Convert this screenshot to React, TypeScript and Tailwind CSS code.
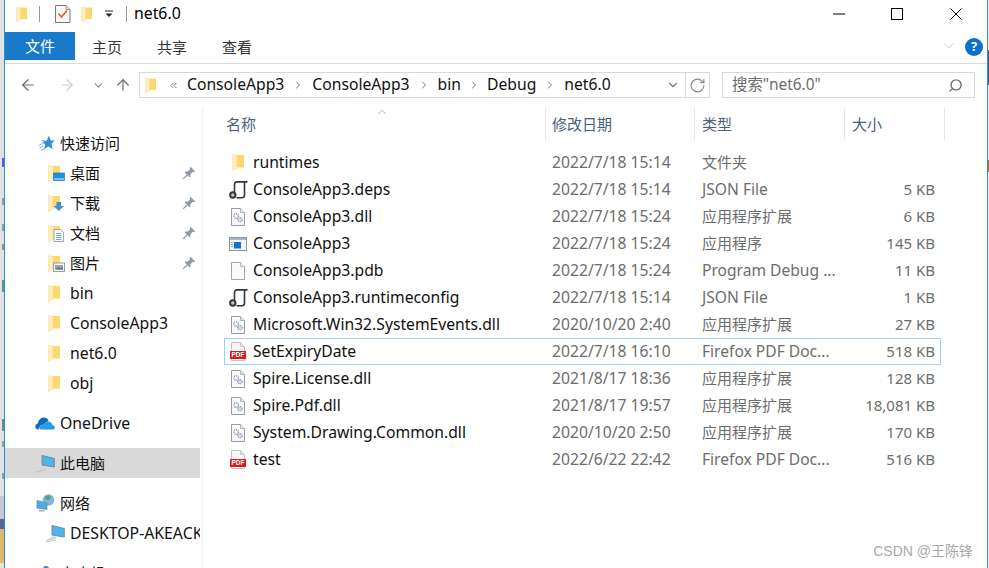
import { ArrowLeft, ArrowRight, ArrowUp, ChevronDown, ChevronRight, ChevronUp, ChevronsLeft, RotateCw, Search } from "lucide-react";
import type { ReactNode } from "react";

function Folder({ className = "w-[13px] h-[17px]" }: { className?: string }) {
  return (
    <svg viewBox="0 0 13 17" className={className + " shrink-0"}>
      <path d="M3 1h9v12.5H3z" fill="#fcd770" />
      <path d="M0 0.5 5 1.5V14.5L0 16.8z" fill="#ffeebb" stroke="#f4dc9a" strokeWidth="0.5" />
    </svg>
  );
}

function QuickFolder({ overlay }: { overlay: "desktop" | "down" | "doc" | "pic" }) {
  return (
    <svg viewBox="0 0 17 17" className="w-[17px] h-[17px] shrink-0">
      <path d="M3 1h9v12.5H3z" fill="#fcd770" />
      <path d="M0 0.5 5 1.5V14.5L0 16.8z" fill="#ffeebb" stroke="#f4dc9a" strokeWidth="0.5" />
      {overlay === "desktop" && (
        <>
          <rect x="5.5" y="8" width="11" height="7.5" fill="#1b8fe6" stroke="#0d6fbd" strokeWidth="0.6" />
          <path d="M6 14H16" stroke="#d8ecfa" />
        </>
      )}
      {overlay === "down" && <path d="M8.5 7H13V11H16L10.8 16 5.8 11H8.5z" fill="#3a8fde" />}
      {overlay === "doc" && (
        <>
          <path d="M6 4.5H12.5L15.5 7.5V16.5H6z" fill="#fbfbfb" stroke="#8c98a6" strokeWidth="0.8" />
          <path d="M8 8.5H13M8 10.5H13.5M8 12.5H13.5M8 14.5H13.5" stroke="#4a9ae0" strokeWidth="0.8" />
        </>
      )}
      {overlay === "pic" && (
        <>
          <rect x="5.5" y="8" width="11" height="8.5" fill="#fafafa" stroke="#9aa0a6" />
          <rect x="7" y="10" width="8" height="4.5" fill="#8fa4b4" />
          <path d="M7 14.5 10.5 12 12.5 13.5 15 12.5V14.5z" fill="#57707f" />
        </>
      )}
    </svg>
  );
}

function PinIcon() {
  return (
    <svg viewBox="0 0 14 14" className="w-[14px] h-[14px] shrink-0" fill="#8f9aa5">
      <path d="M8.5 0.8 13.2 5.5 11.8 6.3 10.8 5.8 8.4 8.2 8.4 10.6 7.4 11.2 2.8 6.6 3.4 5.6 5.8 5.6 8.2 3.2 7.7 2.2z" />
      <path d="M4.6 8.4 5.6 9.4 1.4 13.2 0.8 12.6z" />
    </svg>
  );
}

function StarIcon() {
  return (
    <svg viewBox="0 0 17 16" className="w-[17px] h-[16px] shrink-0">
      <path d="M11 0.5 12.6 5.4 16.8 5.6 13.5 8.8 14.6 14.2 10.2 11.2 6 14.8 7.2 9.6 4.2 7 8.8 5.6z" fill="#2b8fe0" />
      <path d="M0.5 10.5 5 8.5M1.5 13 5.5 11M3 15.5 6.5 13.5M3 5.5 7 5.5" stroke="#7dbdf0" strokeWidth="1" />
    </svg>
  );
}

function CloudIcon() {
  return (
    <svg viewBox="0 0 20 14" className="w-[20px] h-[14px] shrink-0">
      <path d="M3.5 13.5C1.5 13.5 0.3 12 0.3 10.4 0.3 8.8 1.5 7.6 3 7.4 3.4 4 5.8 1.6 8.8 1.6 11 1.6 12.8 2.8 13.6 4.6L10 8 5.5 9.5z" fill="#0f6cc0" />
      <path d="M5 13.5C4 11 5.5 9 8 8.8 9 7 11 5.6 13 5.6 15.4 5.6 17 7 17.4 9 18.8 9.2 19.8 10.2 19.8 11.4 19.8 12.6 18.8 13.5 17.6 13.5z" fill="#2b9be8" />
    </svg>
  );
}

function PcIcon() {
  return (
    <svg viewBox="0 0 20 19" className="w-[20px] h-[19px] shrink-0">
      <path d="M7 1.5 19.3 4.5V13L7 11z" fill="#4fb4ee" stroke="#6f8193" strokeWidth="0.9" />
      <path d="M8 12 11.5 13 11 15 1 17.2 0.5 16.4z" fill="#d4d8dc" />
      <path d="M1 18 11 16" stroke="#b8bdc2" strokeWidth="0.8" />
    </svg>
  );
}

function NetworkIcon() {
  return (
    <svg viewBox="0 0 19 18" className="w-[19px] h-[18px] shrink-0">
      <circle cx="12.5" cy="6" r="5.8" fill="#7fb6dd" />
      <path d="M9 3c2-2 5-2 6 0-1 2-1 3-3 3S9 5 9 3z" fill="#5f9e7c" />
      <path d="M1 6.5 11 9v6.5L1 14z" fill="#47aeea" stroke="#74899c" strokeWidth="0.8" />
      <path d="M3 15.5 9 16.5V17.5H3z" fill="#a9b2ba" />
    </svg>
  );
}

function PersonIcon() {
  return (
    <svg viewBox="0 0 16 16" className="w-[16px] h-[16px] shrink-0">
      <circle cx="8" cy="4" r="3" fill="#3b7fc4" />
      <path d="M2 15C2 10 5 8 8 8S14 10 14 15z" fill="#3b7fc4" />
    </svg>
  );
}

function ScriptIcon() {
  return (
    <svg viewBox="0 0 19 18" className="w-[19px] h-[18px] shrink-0" fill="none">
      <path d="M5.5 11.5V3.5C5.5 1.8 6.6 0.9 8 0.9H18.5" stroke="#33383d" strokeWidth="1.6" />
      <path d="M15.5 1V14C15.5 15.8 14.4 16.7 12.8 16.7H7.5" stroke="#33383d" strokeWidth="1.6" />
      <circle cx="3.8" cy="14" r="2.7" stroke="#33383d" strokeWidth="2" fill="#c4c8cc" />
    </svg>
  );
}

function DllIcon() {
  return (
    <svg viewBox="0 0 14 18" className="w-[14px] h-[18px] shrink-0">
      <path d="M0.5 0.5H9.5L13.5 4.5V17.5H0.5z" fill="#fafafa" stroke="#9a9a9a" />
      <path d="M9.5 0.5V4.5H13.5" fill="#e4e4e4" stroke="#b4b4b4" />
      <circle cx="5.2" cy="8" r="2.3" fill="none" stroke="#9a9fa6" strokeWidth="1.4" strokeDasharray="1.2 0.7" />
      <circle cx="9" cy="11.8" r="2.2" fill="#cfe0f2" stroke="#7d9cc0" strokeWidth="1.1" strokeDasharray="1.2 0.7" />
    </svg>
  );
}

function ExeIcon() {
  return (
    <svg viewBox="0 0 18 14" className="w-[18px] h-[14px] shrink-0">
      <rect x="0.5" y="0.5" width="17" height="13" fill="#f3f5f7" stroke="#8c97a3" />
      <rect x="1" y="1" width="16" height="2" fill="#a9b6c4" />
      <rect x="5" y="5" width="7" height="6.5" fill="#0a74d6" />
      <path d="M2 5.5H4M2 7.5H4M2 9.5H4" stroke="#98a4b0" />
    </svg>
  );
}

function BlankIcon() {
  return (
    <svg viewBox="0 0 14 18" className="w-[14px] h-[18px] shrink-0">
      <path d="M0.5 0.5H9.5L13.5 4.5V17.5H0.5z" fill="#fafafa" stroke="#a6a6a6" />
      <path d="M9.5 0.5V4.5H13.5" fill="#efefef" stroke="#c0c0c0" />
    </svg>
  );
}

function PdfIcon() {
  return (
    <svg viewBox="0 0 16 19" className="w-[16px] h-[19px] shrink-0">
      <path d="M1.5 0.5H10.5L14.5 4.5V18.5H1.5z" fill="#f7f7f7" stroke="#c2c2c2" />
      <path d="M10.5 0.5V4.5H14.5" fill="#e2e2e2" stroke="#c8c8c8" />
      <rect x="0" y="9" width="16" height="8" fill="#e01a1a" />
      <text x="8" y="15.2" textAnchor="middle" fontSize="6.4" fontWeight="700" fill="#fff" fontFamily="Liberation Sans, sans-serif">PDF</text>
    </svg>
  );
}

function CheckDocIcon() {
  return (
    <svg viewBox="0 0 16 18" className="w-[16px] h-[18px] shrink-0">
      <path d="M0.5 0.5H11L15 4.5V17.5H0.5z" fill="#f8f8f8" stroke="#777" />
      <path d="M11 0.5V4.5H15" fill="#ddd" stroke="#999" />
      <path d="M3.5 8.5 6.5 12 12 5.5" fill="none" stroke="#e4572a" strokeWidth="1.6" />
    </svg>
  );
}

function SideRow({ icon, label, indent, wrap, pin = false, active = false, latin = false }: { icon: ReactNode; label: string; indent: string; wrap: string; pin?: boolean; active?: boolean; latin?: boolean }) {
  return (
    <div className={`h-[30px] w-[195px] flex items-center overflow-hidden whitespace-nowrap ${indent} ${active ? "bg-[#d9d9d9]" : ""}`}>
      <div className={`${wrap} shrink-0 flex`}>{icon}</div>
      <span className={`${latin ? "text-[15.8px] pt-[1px]" : "text-[15px]"} text-[#111]`}>{label}</span>
      {pin && <span className="ml-auto mr-[4px] flex"><PinIcon /></span>}
    </div>
  );
}

const files = [
  { icon: <Folder />, name: "runtimes", date: "2022/7/18 15:14", type: "文件夹", size: "" },
  { icon: <ScriptIcon />, name: "ConsoleApp3.deps", date: "2022/7/18 15:14", type: "JSON File", size: "5 KB" },
  { icon: <DllIcon />, name: "ConsoleApp3.dll", date: "2022/7/18 15:24", type: "应用程序扩展", size: "6 KB" },
  { icon: <ExeIcon />, name: "ConsoleApp3", date: "2022/7/18 15:24", type: "应用程序", size: "145 KB" },
  { icon: <BlankIcon />, name: "ConsoleApp3.pdb", date: "2022/7/18 15:24", type: "Program Debug ...", size: "11 KB" },
  { icon: <ScriptIcon />, name: "ConsoleApp3.runtimeconfig", date: "2022/7/18 15:14", type: "JSON File", size: "1 KB" },
  { icon: <DllIcon />, name: "Microsoft.Win32.SystemEvents.dll", date: "2020/10/20 2:40", type: "应用程序扩展", size: "27 KB" },
  { icon: <PdfIcon />, name: "SetExpiryDate", date: "2022/7/18 16:10", type: "Firefox PDF Doc...", size: "518 KB", hot: true },
  { icon: <DllIcon />, name: "Spire.License.dll", date: "2021/8/17 18:36", type: "应用程序扩展", size: "128 KB" },
  { icon: <DllIcon />, name: "Spire.Pdf.dll", date: "2021/8/17 19:57", type: "应用程序扩展", size: "18,081 KB" },
  { icon: <DllIcon />, name: "System.Drawing.Common.dll", date: "2020/10/20 2:50", type: "应用程序扩展", size: "170 KB" },
  { icon: <PdfIcon />, name: "test", date: "2022/6/22 22:42", type: "Firefox PDF Doc...", size: "516 KB" },
];

const crumbs = ["ConsoleApp3", "ConsoleApp3", "bin", "Debug", "net6.0"];

const child = { indent: "pl-[43px]", wrap: "w-[22px]" };

export default function App() {
  return (
    <div className="relative w-[989px] h-[568px] overflow-hidden flex bg-white font-['Noto_Sans','Noto_Sans_CJK_SC',sans-serif]">
      {/* desktop showing behind the window, left */}
      <div className="w-[4px] shrink-0 bg-[#e2e2e2] flex flex-col items-end">
        <div className="h-[158px]" />
        <div className="h-[9px] w-[2px] bg-[#5a5ae8]" />
        <div className="h-[31px]" />
        <div className="h-[7px] w-[2px] bg-[#7fa89e]" />
        <div className="h-[19px]" />
        <div className="h-[7px] w-[2px] bg-[#7fa89e]" />
        <div className="h-[13px]" />
        <div className="h-[6px] w-[2px] bg-[#a08c74]" />
        <div className="h-[30px]" />
        <div className="h-[12px] w-[2px] bg-[#5f9488]" />
        <div className="h-[127px]" />
        <div className="h-[12px] w-[2px] bg-[#5f9488]" />
        <div className="h-[10px]" />
        <div className="h-[6px] w-[2px] bg-[#7fa89e]" />
        <div className="h-[26px]" />
        <div className="h-[6px] w-[2px] bg-[#7fa89e]" />
        <div className="h-[17px]" />
        <div className="h-[23px] w-full bg-[#c4c8d2]" />
        <div className="h-[10px] w-full bg-[#56689a]" />
        <div className="h-[34px] w-full bg-[#e0b96c]" />
      </div>

      {/* window */}
      <div className="w-[984px] shrink-0 h-full border-l border-r border-[#2b8fe0] flex flex-col">
        {/* title bar */}
        <div className="h-[32px] flex items-center shrink-0 pl-[11px] pb-[4px]">
          <Folder className="w-[12px] h-[17px]" />
          <div className="ml-[11px] w-px h-[16px] bg-[#999]" />
          <div className="ml-[15px]"><CheckDocIcon /></div>
          <div className="ml-[10px]"><Folder className="w-[12px] h-[17px]" /></div>
          <svg viewBox="0 0 8 8" className="ml-[12px] w-[8px] h-[8px]">
            <path d="M0 1H8" stroke="#222" strokeWidth="1" />
            <path d="M0.5 3.5H7.5L4 7z" fill="#222" />
          </svg>
          <div className="ml-[13px] w-px h-[16px] bg-[#999]" />
          <span className="ml-[7px] text-[15.8px] text-black">net6.0</span>
          <svg viewBox="0 0 12 2" className="ml-auto w-[12px] h-[2px]"><path d="M0 1H12" stroke="#000" /></svg>
          <svg viewBox="0 0 12 12" className="ml-[46px] w-[12px] h-[12px]"><rect x="0.5" y="0.5" width="11" height="11" fill="none" stroke="#000" /></svg>
          <svg viewBox="0 0 12 12" className="ml-[47px] mr-[25px] w-[12px] h-[12px]"><path d="M0.5 0.5 11.5 11.5M11.5 0.5 0.5 11.5" stroke="#000" /></svg>
        </div>

        {/* ribbon tabs */}
        <div className="h-[32px] shrink-0 flex items-start border-b border-[#dadbdc]">
          <div className="w-[70px] h-[28px] bg-[#1979ca] text-white text-[15px] flex items-center justify-center">文件</div>
          <span className="ml-[17px] h-[28px] leading-[30px] text-[15px] text-[#333]">主页</span>
          <span className="ml-[35px] h-[28px] leading-[30px] text-[15px] text-[#333]">共享</span>
          <span className="ml-[35px] h-[28px] leading-[30px] text-[15px] text-[#333]">查看</span>
          <ChevronDown className="ml-auto mt-[6px] w-[16px] h-[16px] text-[#b8bcc0]" strokeWidth={1} />
          <div className="ml-[8px] mr-[4px] mt-[6px] w-[18px] h-[18px] rounded-full bg-[#0a6fd0] text-white text-[13px] font-bold flex items-center justify-center">?</div>
        </div>

        {/* nav bar */}
        <div className="h-[26px] mt-[8px] shrink-0 flex items-center">
          <ArrowLeft className="ml-[14px] w-[18px] h-[18px] text-[#6f6f6f]" strokeWidth={1.6} />
          <ArrowRight className="ml-[21px] w-[18px] h-[18px] text-[#d0d0d0]" strokeWidth={1.6} />
          <ChevronDown className="ml-[16px] w-[13px] h-[13px] text-[#8a8a8a]" strokeWidth={2} />
          <ArrowUp className="ml-[9px] w-[18px] h-[18px] text-[#6f6f6f]" strokeWidth={1.6} />

          <div className="ml-[7px] w-[571px] h-[26px] border border-[#d9d9d9] flex items-center">
            <div className="ml-[5px]"><Folder className="w-[12px] h-[17px]" /></div>
            <ChevronsLeft className="ml-[11px] w-[11px] h-[11px] text-[#777]" />
            {crumbs.map((c, i) => (
              <div key={i} className="flex items-center">
                {i > 0 && <ChevronRight className={`${i === 3 ? "mx-[7px]" : "mx-[8px]"} w-[12px] h-[12px] text-[#777]`} />}
                <span className={`text-[15.7px] text-[#111] ${i === 0 ? "ml-[8px]" : ""}`}>{c}</span>
              </div>
            ))}
            <ChevronDown className="ml-auto w-[14px] h-[14px] text-[#777]" />
            <div className="ml-[5px] w-px h-full bg-[#d9d9d9]" />
            <RotateCw className="mx-[3px] w-[17px] h-[17px] text-[#8a8a8a]" strokeWidth={1.6} />
          </div>

          <div className="ml-[12px] w-[253px] h-[26px] border border-[#d9d9d9] flex items-center pl-[9px] pr-[11px]">
            <span className="text-[15.4px] text-[#6d6d6d]">搜索"net6.0"</span>
            <Search className="ml-auto w-[15px] h-[15px] text-[#6f6f6f] -scale-x-100" strokeWidth={2.2} />
          </div>
        </div>

        {/* body */}
        <div className="flex-1 flex mt-[10px] min-h-0">
          {/* navigation pane */}
          <div className="w-[198px] shrink-0 border-r border-[#f0f0f0] pt-[20px] overflow-hidden">
            <SideRow icon={<StarIcon />} label="快速访问" indent="pl-[33px]" wrap="w-[22px]" />
            <SideRow icon={<QuickFolder overlay="desktop" />} label="桌面" pin {...child} />
            <SideRow icon={<QuickFolder overlay="down" />} label="下载" pin {...child} />
            <SideRow icon={<QuickFolder overlay="doc" />} label="文档" pin {...child} />
            <SideRow icon={<QuickFolder overlay="pic" />} label="图片" pin {...child} />
            <SideRow icon={<Folder />} label="bin" latin {...child} />
            <SideRow icon={<Folder />} label="ConsoleApp3" latin {...child} />
            <SideRow icon={<Folder />} label="net6.0" latin {...child} />
            <SideRow icon={<Folder />} label="obj" latin {...child} />
            <div className="h-[10px]" />
            <SideRow icon={<CloudIcon />} label="OneDrive" latin indent="pl-[30px]" wrap="w-[25px]" />
            <div className="h-[10px]" />
            <SideRow icon={<PcIcon />} label="此电脑" indent="pl-[30px]" wrap="w-[25px]" active />
            <div className="h-[10px]" />
            <SideRow icon={<NetworkIcon />} label="网络" indent="pl-[31px]" wrap="w-[24px]" />
            <SideRow icon={<PcIcon />} label="DESKTOP-AKEACK" latin indent="pl-[40px]" wrap="w-[25px]" />
            <div className="h-[10px]" />
            <SideRow icon={<PersonIcon />} label="家庭组" indent="pl-[33px]" wrap="w-[22px]" />
          </div>

          {/* file list */}
          <div className="relative flex-1 min-w-0">
            <ChevronUp className="absolute left-[172px] top-[-3px] w-[14px] h-[14px] text-[#9aa0a6]" strokeWidth={1.4} />
            <div className="h-[32px] flex text-[15px] text-[#4c607a]">
              <div className="w-[343px] pl-[23px] border-r border-[#e5e5e5] flex items-center">名称</div>
              <div className="w-[149px] pl-[6px] border-r border-[#e5e5e5] flex items-center">修改日期</div>
              <div className="w-[150px] pl-[7px] border-r border-[#e5e5e5] flex items-center">类型</div>
              <div className="w-[100px] pl-[7px] border-r border-[#e5e5e5] flex items-center">大小</div>
            </div>
            <div className="mt-[9px] ml-[21px] w-[717px]">
              {files.map((f) => (
                <div key={f.name} className={`h-[27px] flex items-center border ${f.hot ? "border-[#99d1ff]" : "border-transparent"}`}>
                  <div className="w-[26px] mr-[2px] shrink-0 flex justify-center">{f.icon}</div>
                  <span className="w-[299px] shrink-0 text-[15.7px] text-[#111] whitespace-nowrap">{f.name}</span>
                  <span className="w-[150px] shrink-0 text-[15.7px] text-[#6d6d6d] whitespace-nowrap">{f.date}</span>
                  <span className={`w-[134px] shrink-0 text-[#6d6d6d] whitespace-nowrap ${/[\u4e00-\u9fff]/.test(f.type) ? "text-[15px]" : "text-[15.6px]"}`}>{f.type}</span>
                  <span className="w-[99px] shrink-0 text-right text-[15px] text-[#6d6d6d] whitespace-nowrap">{f.size}</span>
                </div>
              ))}
            </div>
          </div>
        </div>
      </div>

      {/* desktop showing behind the window, right */}
      <div className="w-[1px] shrink-0 bg-[#eeeeee] flex flex-col">
        <div className="h-[50px]" />
        <div className="h-[35px] bg-[#3f5f8f]" />
        <div className="h-[75px]" />
        <div className="h-[12px] bg-[#a5722c]" />
      </div>

      <span className="absolute right-[16px] bottom-[6px] text-[14px] text-[#a8a8a8] font-['Liberation_Sans','Noto_Sans_CJK_SC',sans-serif]">CSDN @王陈锋</span>
    </div>
  );
}
